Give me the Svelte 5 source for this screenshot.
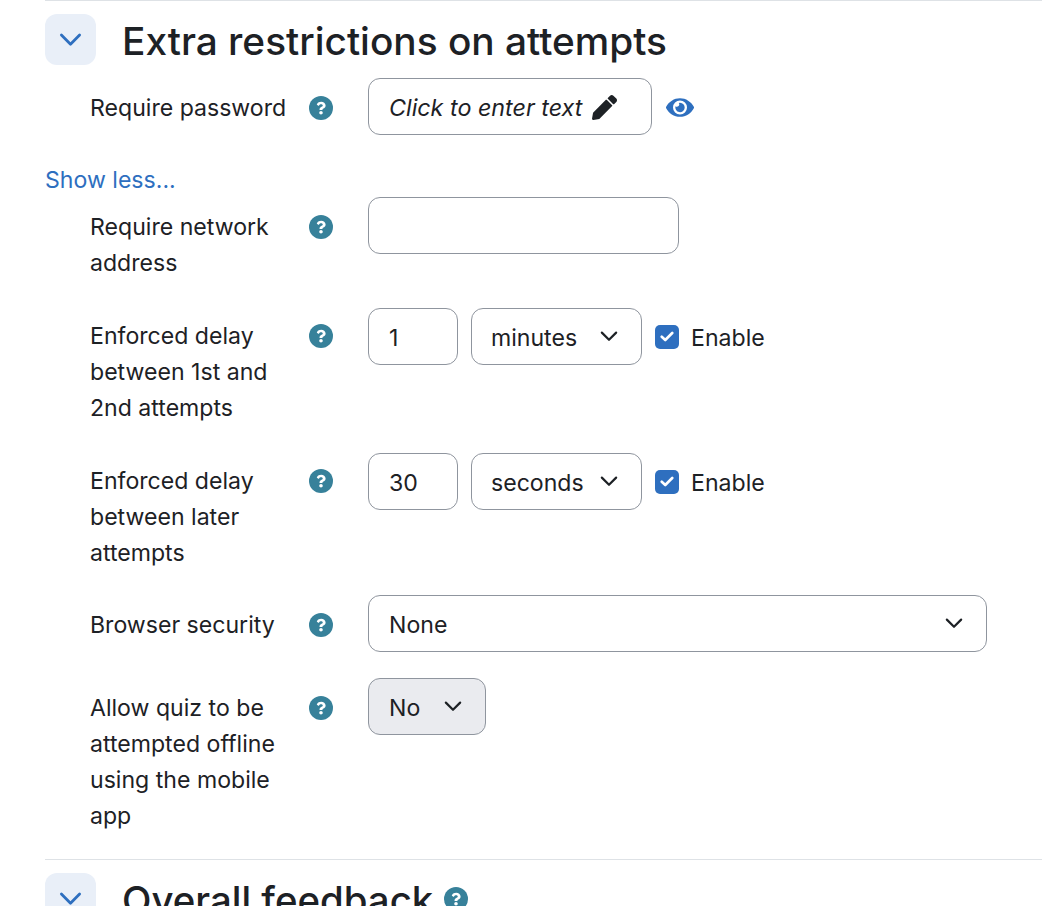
<script>
	const mark = 'M262.655 90c-54.497 0-89.255 22.957-116.549 63.758-3.536 5.286-2.353 12.415 2.715 16.258l34.699 26.31c5.205 3.947 12.621 3.008 16.665-2.122 17.864-22.658 30.113-35.797 57.303-35.797 20.429 0 45.698 13.148 45.698 32.958 0 14.976-12.363 22.667-32.534 33.976C247.128 238.528 216 254.941 216 296v4c0 6.627 5.373 12 12 12h56c6.627 0 12-5.373 12-12v-1.345c0-28.462 83.186-29.647 83.186-106.655 0-57.997-60.158-101.999-116.531-101.999zM256 338c-25.916 0-47 21.084-47 47 0 25.916 21.084 47 47 47s47-21.084 47-47c0-25.916-21.084-47-47-47z';
</script>

{#snippet helpIcon(cls)}
	<svg class={cls} viewBox="0 0 512 512" aria-hidden="true">
		<circle cx="256" cy="256" r="256" />
		<path class="help-mark" d={mark} transform="translate(256 256) scale(.8) translate(-256 -256)" />
	</svg>
{/snippet}

{#snippet chevron(cls)}
	<svg class={cls} viewBox="0 0 16 10" aria-hidden="true"><path d="M1.5 1.5 8 8l6.5-6.5" fill="none" stroke="currentColor" stroke-width="2" stroke-linecap="round" stroke-linejoin="round" /></svg>
{/snippet}

{#snippet enable()}
	<div class="enable">
		<span class="checkbox">
			<svg viewBox="0 0 16 12" aria-hidden="true"><path d="M2 6.2 6 10l8-8" fill="none" stroke="#fff" stroke-width="3" stroke-linecap="round" stroke-linejoin="round" /></svg>
		</span>
		Enable
	</div>
{/snippet}

<div class="page">
	<section class="section first">
		<div class="head">
			<button class="toggle">{@render chevron('toggle-icon')}</button>
			<h3>Extra restrictions on attempts</h3>
		</div>

		<div class="row password">
			<div class="label">Require password</div>
			<div class="help">{@render helpIcon('help-icon')}</div>
			<div class="field">
				<div class="box inplace">
					<em>Click to enter text</em>
					<svg class="pencil" viewBox="0 0 512 512" aria-hidden="true"><path d="M497.9 142.1l-46.1 46.1c-4.7 4.7-12.3 4.7-17 0l-111-111c-4.7-4.7-4.7-12.3 0-17l46.1-46.1c18.7-18.7 49.1-18.7 67.9 0l60.1 60.1c18.8 18.7 18.8 49.1 0 67.9zM284.2 99.8L21.6 362.4.4 483.9c-2.9 16.4 11.4 30.6 27.8 27.8l121.5-21.3 262.6-262.6c4.7-4.7 4.7-12.3 0-17l-111-111c-4.8-4.7-12.4-4.7-17.1 0z" /></svg>
				</div>
				<svg class="eye" viewBox="0 0 576 512" aria-hidden="true"><path d="M572.52 241.4C518.29 135.59 410.93 64 288 64S57.68 135.64 3.48 241.41a32.35 32.35 0 0 0 0 29.19C57.71 376.41 165.07 448 288 448s230.32-71.64 284.52-177.41a32.35 32.35 0 0 0 0-29.19zM288 400a144 144 0 1 1 144-144 143.93 143.93 0 0 1-144 144zm0-240a95.31 95.31 0 0 0-25.31 3.79 47.85 47.85 0 0 1-66.9 66.9A95.78 95.78 0 1 0 288 160z" /></svg>
			</div>
		</div>

		<a class="more" href="#more">Show less...</a>

		<div class="row network">
			<div class="label">Require network address</div>
			<div class="help">{@render helpIcon('help-icon')}</div>
			<div class="field"><div class="box address"></div></div>
		</div>

		<div class="row delay delay1">
			<div class="label">Enforced delay between 1st and 2nd attempts</div>
			<div class="help">{@render helpIcon('help-icon')}</div>
			<div class="field">
				<div class="box number">1</div>
				<div class="box select unit">minutes {@render chevron('select-icon')}</div>
				{@render enable()}
			</div>
		</div>

		<div class="row delay delay2">
			<div class="label">Enforced delay between later attempts</div>
			<div class="help">{@render helpIcon('help-icon')}</div>
			<div class="field">
				<div class="box number">30</div>
				<div class="box select unit">seconds {@render chevron('select-icon')}</div>
				{@render enable()}
			</div>
		</div>

		<div class="row browser">
			<div class="label">Browser security</div>
			<div class="help">{@render helpIcon('help-icon')}</div>
			<div class="field">
				<div class="box select wide">None {@render chevron('select-icon')}</div>
			</div>
		</div>

		<div class="row offline">
			<div class="label">Allow quiz to be attempted offline using the mobile app</div>
			<div class="help">{@render helpIcon('help-icon')}</div>
			<div class="field">
				<div class="box select disabled">No {@render chevron('select-icon')}</div>
			</div>
		</div>
	</section>

	<section class="section">
		<div class="head">
			<button class="toggle">{@render chevron('toggle-icon')}</button>
			<h3 class="feedback">Overall feedback</h3>
			{@render helpIcon('help-icon head-help')}
		</div>
	</section>
</div>

<style>
	:global(body) {
		margin: 0;
		background: #fff;
		overflow: hidden;
	}
	.page {
		height: 906px;
		overflow: hidden;
		padding-left: 45px;
		font-family: Inter, 'Noto Sans', sans-serif;
		font-size: 23.1px;
		line-height: 36px;
		color: #1d2125;
	}
	.section {
		border-top: 1px solid #dee2e6;
		padding-top: 13px;
	}
	.section.first {
		padding-bottom: 7px;
	}
	.head {
		display: flex;
		align-items: center;
		height: 51px;
		margin-bottom: 13px;
	}
	.toggle {
		width: 51px;
		height: 51px;
		padding: 0;
		border: 0;
		border-radius: 12px;
		background: #e9eff8;
		color: #2e6fbf;
		display: flex;
		align-items: center;
		justify-content: center;
		margin-right: 26px;
	}
	.toggle :global(.toggle-icon) {
		width: 23px;
		height: 14px;
	}
	h3 {
		margin: 2px 0 0;
		font-size: 38.8px;
		line-height: 54px;
		font-weight: 500;
		white-space: nowrap;
	}
	.feedback {
		font-size: 38.4px;
	}
	:global(.head-help) {
		margin-left: 11px;
	}
	.row {
		display: flex;
		margin-left: 45px;
	}
	.label {
		width: 219px;
		padding-top: 12px;
		flex: none;
	}
	.help {
		width: 59px;
		flex: none;
		padding-top: 18px;
		line-height: 0;
	}
	.delay .label {
		padding-top: 10px;
	}
	.delay .help {
		padding-top: 16px;
	}
	:global(.help-icon) {
		width: 24px;
		height: 24px;
		fill: #37819a;
	}
	:global(.help-mark) {
		fill: #fff;
	}
	.field {
		display: flex;
		align-items: flex-start;
		gap: 13px;
	}
	.box {
		box-sizing: border-box;
		height: 57px;
		border: 1px solid #8f959e;
		border-radius: 12px;
		display: flex;
		align-items: center;
		padding: 2px 20px 0;
		background: #fff;
		white-space: nowrap;
	}
	.inplace {
		width: 284px;
	}
	.inplace em {
		font-size: 23.3px;
		margin-right: 10px;
	}
	.pencil {
		width: 25px;
		height: 25px;
		fill: #1d2125;
	}
	.eye {
		width: 28px;
		height: 25px;
		fill: #2e6fbf;
		margin-top: 17px;
		margin-left: 1px;
	}
	.more {
		display: block;
		color: #2e6fbf;
		text-decoration: none;
		margin-top: 27px;
		margin-bottom: -1px;
	}
	.address {
		width: 311px;
	}
	.number {
		width: 90px;
	}
	.unit {
		width: 171px;
		padding-left: 19px;
	}
	.wide {
		width: 619px;
	}
	.select {
		justify-content: space-between;
	}
	.select :global(.select-icon) {
		width: 18px;
		height: 11px;
		margin-right: 3px;
		margin-bottom: 3px;
	}
	.disabled {
		width: 118px;
		background: #eaebef;
	}
	.enable {
		display: flex;
		align-items: center;
		height: 57px;
		padding-top: 2px;
		box-sizing: border-box;
	}
	.checkbox {
		width: 24px;
		height: 24px;
		border-radius: 5px;
		background: #2e6fbf;
		display: flex;
		align-items: center;
		justify-content: center;
		margin-right: 12px;
		margin-bottom: 2px;
	}
	.checkbox svg {
		width: 14px;
		height: 11px;
	}
	.network {
		margin-bottom: 27px;
		margin-top: -1px;
	}
	.delay1 {
		margin-bottom: 27px;
	}
	.delay2 {
		margin-bottom: 24px;
	}
	.browser {
		margin-bottom: 26px;
	}
	.offline {
		margin-bottom: 18px;
	}
</style>
